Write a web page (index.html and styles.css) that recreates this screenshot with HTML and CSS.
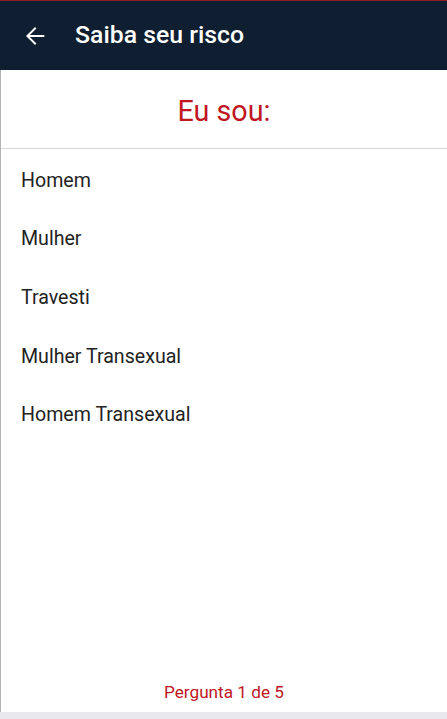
FILE: index.html
```html
<!DOCTYPE html>
<html lang="pt">
<head>
<meta charset="utf-8">
<link rel="stylesheet" href="styles.css">
</head>
<body>
<div class="app">
  <header class="topbar">
    <svg class="back" width="28" height="28" viewBox="0 0 24 24"><path d="M20 11.1H7.6l5.6-5.6L12 4.3 4.3 12l7.7 7.7 1.2-1.2-5.6-5.6H20z" fill="#fff"/></svg>
    <h1 class="title">Saiba seu risco</h1>
  </header>
  <main class="content">
    <div class="question">Eu sou:</div>
    <ul class="options">
      <li class="option">Homem</li>
      <li class="option">Mulher</li>
      <li class="option">Travesti</li>
      <li class="option">Mulher Transexual</li>
      <li class="option">Homem Transexual</li>
    </ul>
    <div class="progress">Pergunta 1 de 5</div>
  </main>
  <div class="navbar"></div>
</div>
</body>
</html>
```
FILE: styles.css
```css
html, body {
  margin: 0;
  padding: 0;
  height: 100%;
}
body {
  font-family: Roboto, "Liberation Sans", sans-serif;
  background: #fff;
}
.app {
  display: flex;
  flex-direction: column;
  height: 719px;
}
.topbar {
  flex: 0 0 auto;
  height: 69px;
  border-top: 1px solid #8e1b24;
  background: #0f1f31;
  display: flex;
  align-items: center;
  padding-left: 21px;
}
.back {
  display: block;
}
.title {
  margin: 0 0 0 26px;
  color: #fff;
  font-size: 24.8px;
  font-weight: 500;
  line-height: 1;
}
.content {
  flex: 1 1 auto;
  display: flex;
  flex-direction: column;
  border-left: 1px solid #b5b5b5;
}
.question {
  height: 79px;
  border-bottom: 1px solid #d6d6d6;
  display: flex;
  align-items: center;
  justify-content: center;
  color: #c0161f;
  font-size: 28.7px;
  box-sizing: border-box;
  padding-top: 3px;
}
.options {
  list-style: none;
  margin: 0;
  padding: 2px 0 0;
  flex: 1 1 auto;
}
.option {
  height: 58.6px;
  display: flex;
  align-items: center;
  padding-left: 20px;
  font-size: 19.6px;
  color: #232323;
}
.progress {
  text-align: center;
  color: #c0161f;
  font-size: 17.2px;
  line-height: 20px;
  padding-bottom: 10px;
}
.navbar {
  flex: 0 0 7px;
  background: #e8e8ee;
}
```
